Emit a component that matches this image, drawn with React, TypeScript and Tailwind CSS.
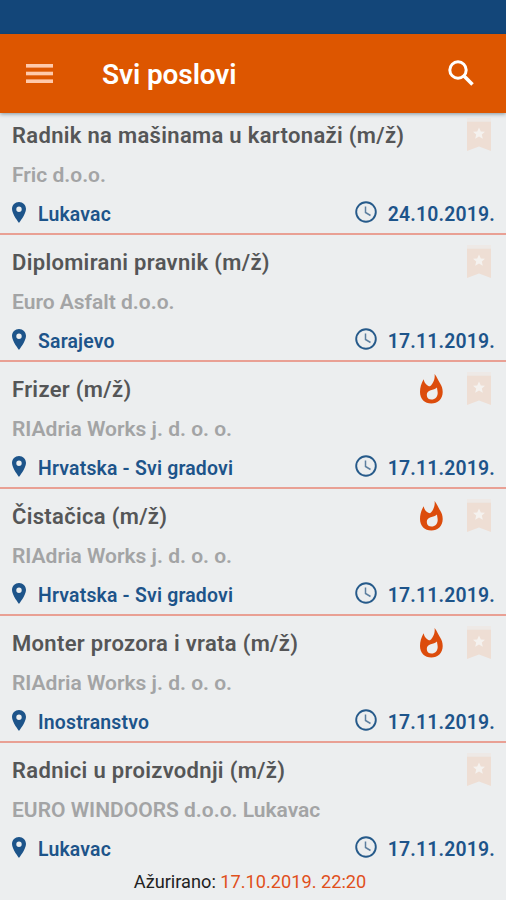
const jobs = [
  { title: "Radnik na mašinama u kartonaži (m/ž)", company: "Fric d.o.o.", city: "Lukavac", date: "24.10.2019.", hot: false },
  { title: "Diplomirani pravnik (m/ž)", company: "Euro Asfalt d.o.o.", city: "Sarajevo", date: "17.11.2019.", hot: false },
  { title: "Frizer (m/ž)", company: "RIAdria Works j. d. o. o.", city: "Hrvatska - Svi gradovi", date: "17.11.2019.", hot: true },
  { title: "Čistačica (m/ž)", company: "RIAdria Works j. d. o. o.", city: "Hrvatska - Svi gradovi", date: "17.11.2019.", hot: true },
  { title: "Monter prozora i vrata (m/ž)", company: "RIAdria Works j. d. o. o.", city: "Inostranstvo", date: "17.11.2019.", hot: true },
  { title: "Radnici u proizvodnji (m/ž)", company: "EURO WINDOORS d.o.o. Lukavac", city: "Lukavac", date: "17.11.2019.", hot: false },
];

function MenuIcon() {
  return (
    <svg className="w-[27px] h-[19px]" viewBox="0 0 27 19" fill="#ffc9ab">
      <rect y="0" width="27" height="3.6" />
      <rect y="7.7" width="27" height="3.6" />
      <rect y="15.4" width="27" height="3.6" />
    </svg>
  );
}

function SearchIcon() {
  return (
    <svg className="w-[26px] h-[26px]" viewBox="0 0 26 26" fill="none" stroke="#fff" strokeWidth="3">
      <circle cx="10" cy="10" r="8.2" />
      <path d="M15.8 15.8 L24.5 24.5" strokeWidth="3.6" />
    </svg>
  );
}

function PinIcon() {
  return (
    <svg className="w-[14px] h-[21px]" viewBox="0 0 14 21" fill="#1d548a">
      <path
        fillRule="evenodd"
        d="M7 0C3.1 0 0 3.1 0 7.1 0 12.3 7 21 7 21s7-8.7 7-13.9C14 3.1 10.9 0 7 0zm0 4.5a2.7 2.7 0 1 1 0 5.4 2.7 2.7 0 0 1 0-5.4z"
      />
    </svg>
  );
}

function ClockIcon() {
  return (
    <svg className="w-[22px] h-[22px]" viewBox="0 0 22 22" fill="none" stroke="#265a8a">
      <circle cx="11" cy="11" r="9.8" strokeWidth="1.9" />
      <path d="M10.5 5.5v6l5 3" strokeWidth="1.5" stroke="#5d7f9f" />
    </svg>
  );
}

function FlameIcon() {
  return (
    <svg className="w-[23px] h-[30px]" viewBox="0 0 23 30" fill="#dc4c0c">
      <path
        fillRule="evenodd"
        d="M14.6 0C15.2 4.500 13.500 9.500 10 12.300 7.300 12 4.500 9.500 3.600 5.200 1.200 9.500 0 13.500 0 18c0 7 4.800 11.500 11.300 11.500S22.700 25 22.700 18c0-3.500-1-6.200-2.700-8.700C18.200 6.300 17 3 14.600 0zM17 13.400c-1.600 1.600-4 2.200-6.300 2.800-2.500.7-3.900 2.400-3.900 4.700 0 2.800 2 4.700 4.700 4.700 3.700 0 6.200-2.900 6.200-6.600 0-2-.6-3.600-.7-5.600z"
      />
    </svg>
  );
}

function BookmarkIcon() {
  return (
    <svg className="w-[24px] h-[34px]" viewBox="0 0 24 34">
      <path d="M0 0h24v3H0z" fill="#eee9e6" />
      <path d="M0 3.5h24V33l-12-4.5L0 33z" fill="#eeded4" />
      <path
        d="M12 9.5l1.8 3.9 4.2.4-3.2 2.8 1 4.2-3.8-2.2-3.8 2.2 1-4.2L6 13.8l4.200-.4z"
        fill="#f5f2ef"
      />
    </svg>
  );
}

function JobRow({ job }: { job: (typeof jobs)[number] }) {
  return (
    <li className="h-[127px] shrink-0 pl-3 pr-[11px] pt-[13px] border-b-2 border-[#e9a094] last:border-transparent">
      <div className="flex h-[30px] items-center justify-between">
        <h2 className="text-[22px] leading-[30px] font-semibold tracking-[0.32px] text-[#555657] whitespace-nowrap">{job.title}</h2>
        <div className="flex items-center gap-[24px] pr-[4px] pb-[2px]">
          {job.hot && <FlameIcon />}
          <BookmarkIcon />
        </div>
      </div>
      <p className="mt-[11px] text-[21px] leading-[26px] font-semibold text-[#a3a4a5]">{job.company}</p>
      <div className="mt-[13px] flex h-[26px] items-center text-[19.4px] font-semibold tracking-[0.2px] text-[#1d548a]">
        <span className="pb-[4px]">
          <PinIcon />
        </span>
        <span className="ml-[12px] pt-px">{job.city}</span>
        <span className="ml-auto mr-[11px] pb-[4px]">
          <ClockIcon />
        </span>
        <span className="pt-px">{job.date}</span>
      </div>
    </li>
  );
}

export default function App() {
  return (
    <div className="flex h-[900px] w-[506px] flex-col overflow-hidden bg-[#eceeef] font-[Roboto,sans-serif]">
      <div className="h-[34px] shrink-0 bg-[#134679]" />
      <header className="relative z-10 flex h-[79px] shrink-0 items-center bg-[#dd5600] pl-[26px] pr-8 shadow-[0_1px_4px_rgba(0,40,60,0.45)]">
        <MenuIcon />
        <h1 className="ml-[49px] pt-[2px] text-[28px] font-semibold tracking-[-0.1px] text-white">Svi poslovi</h1>
        <span className="ml-auto pb-[2px]">
          <SearchIcon />
        </span>
      </header>
      <ul className="-mt-[5px] flex flex-col">
        {jobs.map((job, i) => (
          <JobRow key={i} job={job} />
        ))}
      </ul>
      <footer className="pr-[6px] text-center text-[18.2px] leading-[24px] text-[#222]">
        Ažurirano: <span className="text-[#e0501c]">17.10.2019. 22:20</span>
      </footer>
    </div>
  );
}
